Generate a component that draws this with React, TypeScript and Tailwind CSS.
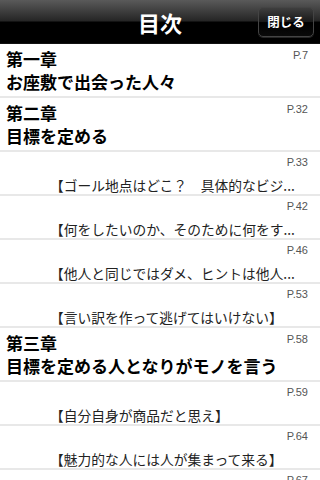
import React from "react";

type Item =
  | { kind: "ch"; label: string; title: string; page: string }
  | { kind: "sub"; text: string; page: string };

const items: Item[] = [
  { kind: "ch", label: "第一章", title: "お座敷で出会った人々", page: "P.7" },
  { kind: "ch", label: "第二章", title: "目標を定める", page: "P.32" },
  { kind: "sub", text: "【ゴール地点はどこ？　具体的なビジ...", page: "P.33" },
  { kind: "sub", text: "【何をしたいのか、そのために何をす...", page: "P.42" },
  { kind: "sub", text: "【他人と同じではダメ、ヒントは他人...", page: "P.46" },
  { kind: "sub", text: "【言い訳を作って逃げてはいけない】", page: "P.53" },
  { kind: "ch", label: "第三章", title: "目標を定める人となりがモノを言う", page: "P.58" },
  { kind: "sub", text: "【自分自身が商品だと思え】", page: "P.59" },
  { kind: "sub", text: "【魅力的な人には人が集まって来る】", page: "P.64" },
  { kind: "sub", text: "【人の話を聞く】", page: "P.67" },
];

const jp = { fontFamily: '"Noto Sans CJK JP", "Noto Sans", sans-serif' };
const latin = { fontFamily: '"Liberation Sans", Arial, sans-serif' };

export default function App() {
  return (
    <div className="w-[320px] h-[480px] overflow-hidden bg-white" style={jp}>
      <div className="h-[44px] bg-[linear-gradient(to_bottom,#5a5a5a_0%,#262626_48%,#000_52%,#000_100%)] flex items-center justify-center relative border-b border-[#111]">
        <span className="text-white text-[22px] font-bold leading-none">目次</span>
        <button className="absolute right-[6px] top-[7px] h-[30px] w-[56px] rounded-[5px] border border-[#444] bg-[linear-gradient(to_bottom,#3e3e3e_0%,#181818_50%,#000_52%,#0a0a0a_100%)] text-white text-[12.5px] font-bold flex items-center justify-center shadow-[0_1px_0_rgba(255,255,255,0.15)]">
          閉じる
        </button>
      </div>
      <div className="flex flex-col">
        {items.map((it, i) =>
          it.kind === "ch" ? (
            <div key={i} className="h-[54px] border-b-2 border-[#e8e8e8] flex flex-col pl-[6px] pr-[12px] pt-[2px]">
              <div className="flex justify-between items-start h-[26px]">
                <span className="text-[17px] font-bold leading-[26px] text-black">{it.label}</span>
                <span className="text-[11px] leading-none mt-[4px] text-[#555]" style={latin}>{it.page}</span>
              </div>
              <div className="text-[17px] font-bold leading-[20px] text-black whitespace-nowrap">{it.title}</div>
            </div>
          ) : (
            <div key={i} className="h-[44px] border-b-2 border-[#e8e8e8] flex flex-col pr-[12px] pt-[4px]">
              <div className="flex justify-end h-[12px]">
                <span className="text-[11px] leading-[12px] text-[#555]" style={latin}>{it.page}</span>
              </div>
              <div className="pl-[50px] mt-[7px] text-[13.75px] leading-[20px] text-[#222] whitespace-nowrap">{it.text}</div>
            </div>
          )
        )}
      </div>
    </div>
  );
}
